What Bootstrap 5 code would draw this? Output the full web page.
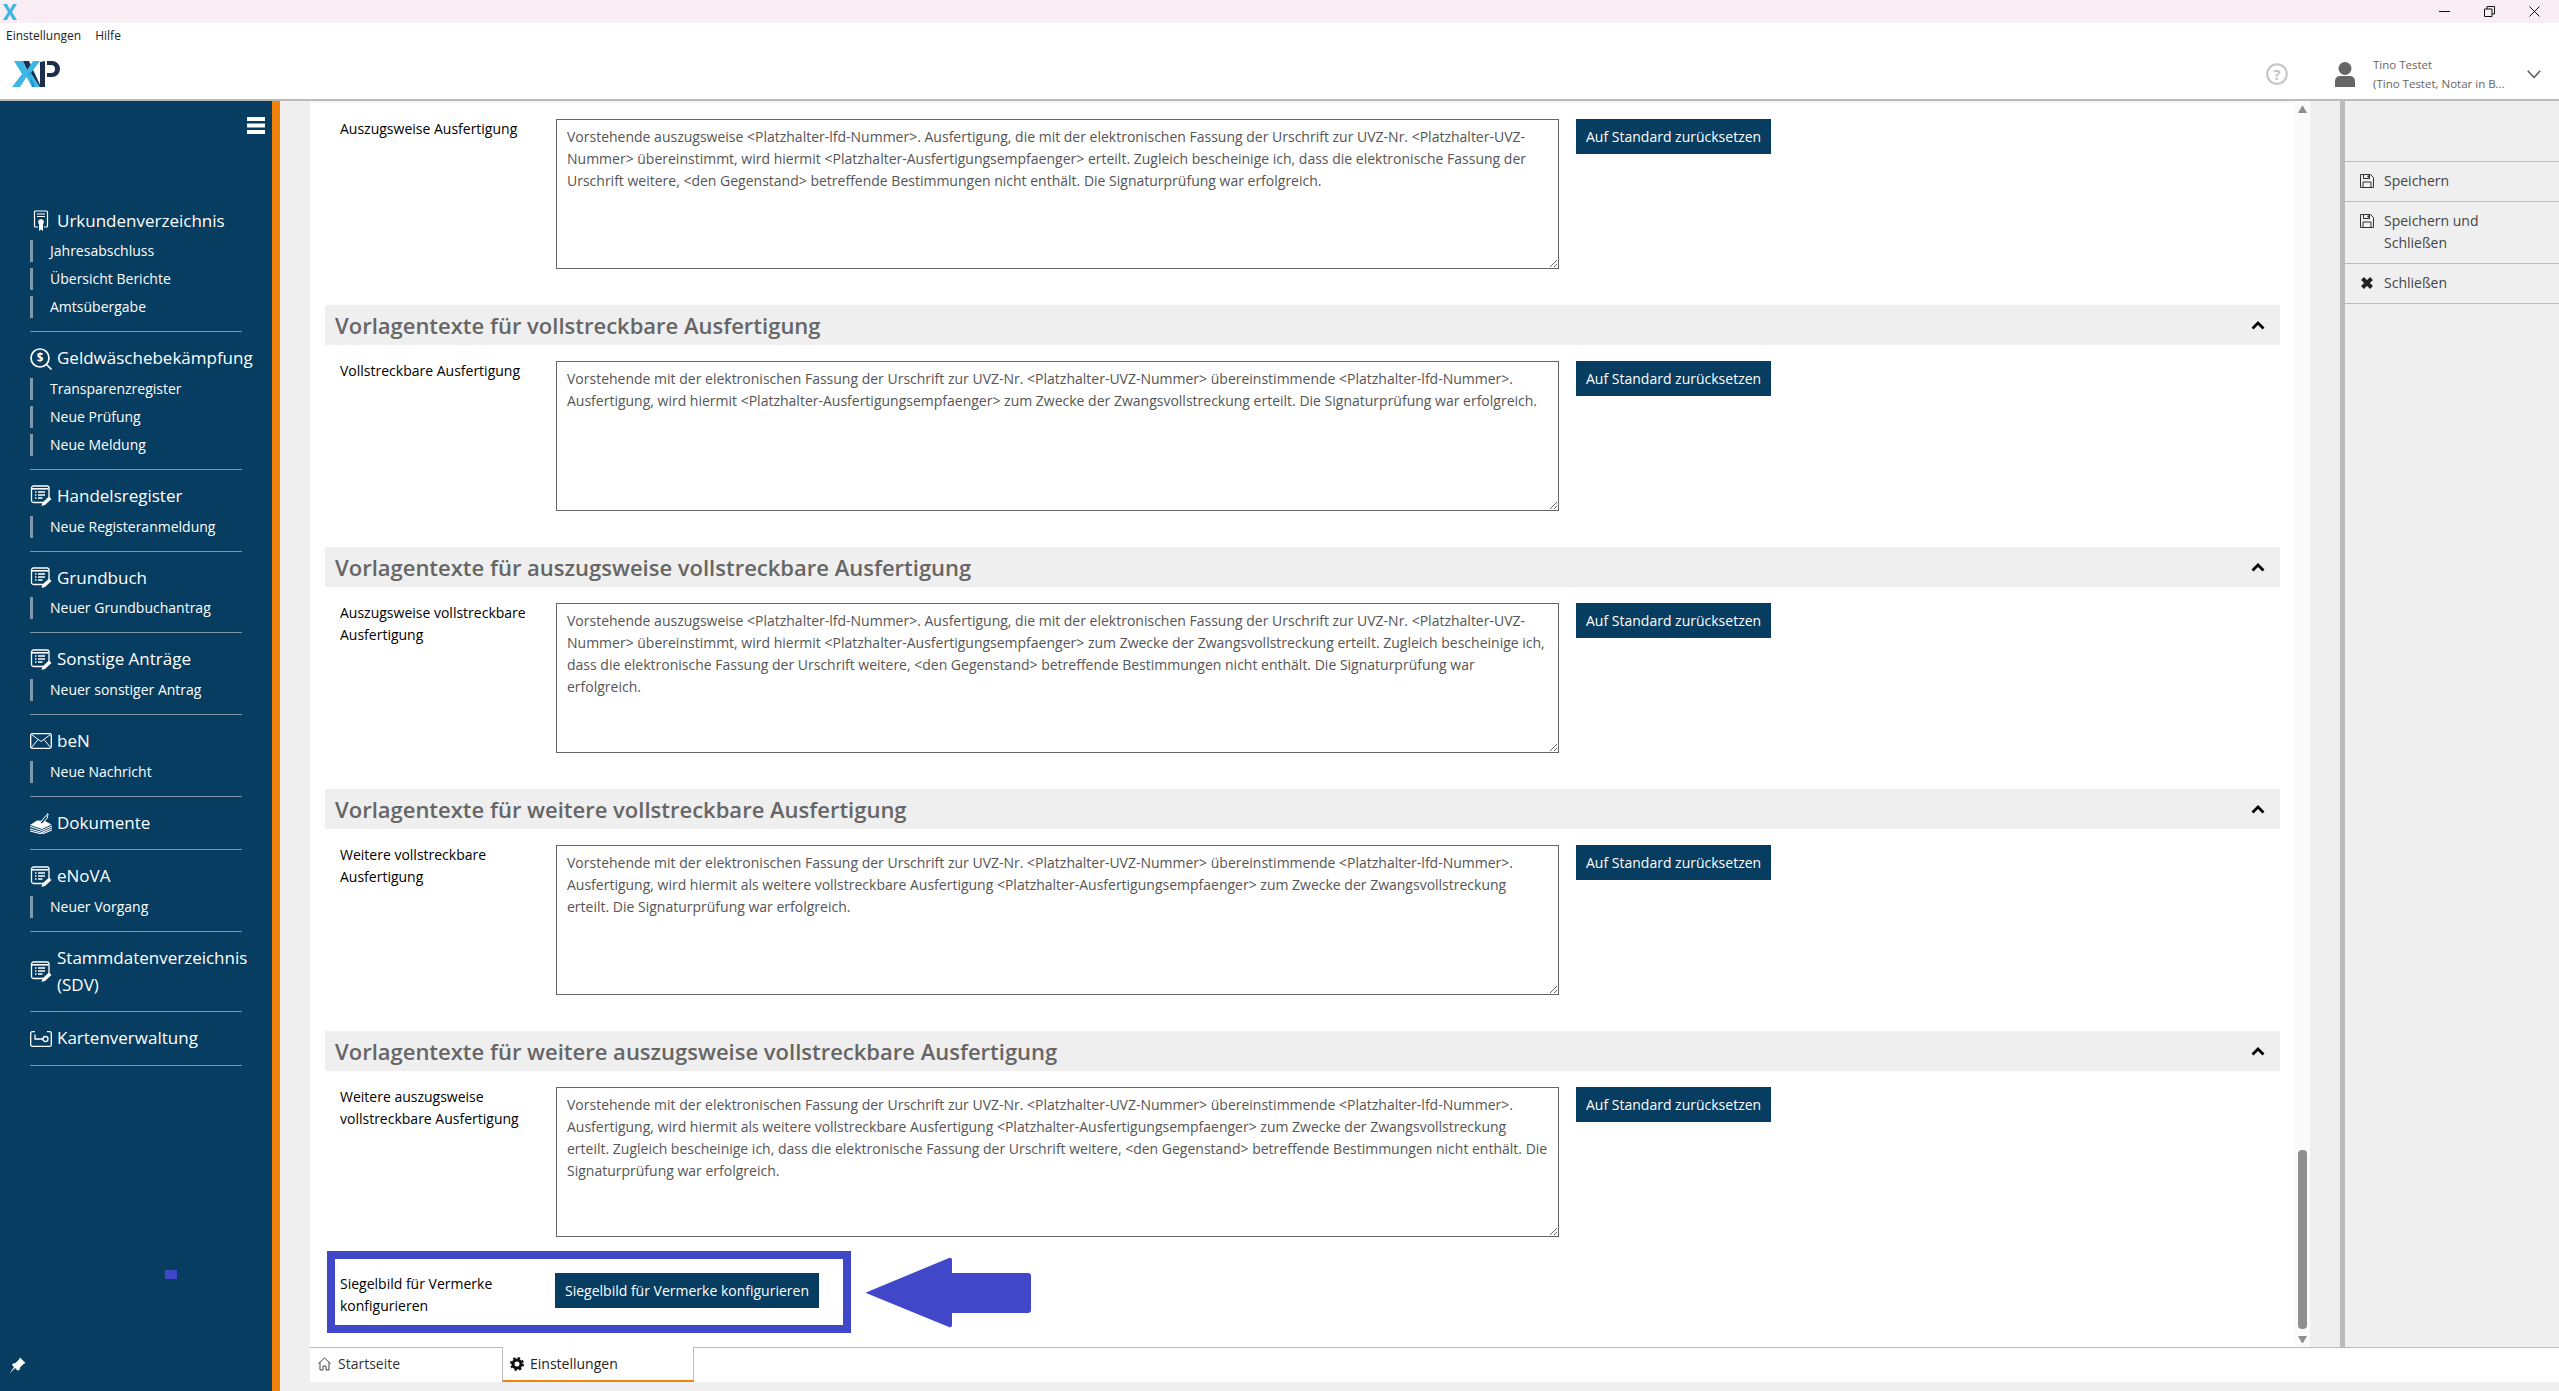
<!DOCTYPE html>
<html lang="de">
<head>
    <meta charset="UTF-8">
    <meta name="viewport" content="width=device-width, initial-scale=1.0">
    <title>Einstellungen</title>
    <link href="https://cdn.jsdelivr.net/npm/bootstrap@5.3.0/dist/css/bootstrap.min.css" rel="stylesheet">
    <style>
        html, body { height: 100%; overflow: hidden; }
        body { font-family: "Open Sans", "Liberation Sans", sans-serif; font-size: 14px; line-height: 22px; background: #efefef; color: #000; }
        .win-title { height: 23px; background: #f8eef4; padding: 0 19px 0 3px; }
        .win-btns { gap: 34px; }
        .app-head { height: 78px; background: #fff; border-bottom: 2px solid #bbb; position: relative; }
        .app-menu { font-size: 12px; line-height: 16px; padding: 5px 0 0 6px; gap: 14px; color: #222; }
        .app-logo { display: block; margin: 16px 0 0 12px; }
        .head-right { padding: 26px 18px 0 0; }
        .help-ico { margin-right: 47px; }
        .user-text { font-size: 11.5px; line-height: 19px; color: #666; width: 140px; margin: 0 14px 0 18px; }
        .main-area { height: 1290px; }
        .side { width: 280px; background: #063d60; border-right: 8px solid #f28109; color: #fff; padding: 16px 0 0 30px; position: relative; }
        .burger { margin: 0 0 60.67px 217px; width: 18px; height: 17px; display: block; }
        .side-group { width: 212px; border-bottom: 1px solid #7e97a9; padding: 13px 0; }
        .side-head { font-size: 17px; line-height: 26.67px; gap: 5px; }
        .side-head svg { flex: 0 0 22px; }
        .side-subs { margin-top: 6px; gap: 6px; }
        .side-sub { border-left: 3px solid #7e97a9; padding-left: 17px; font-size: 14px; white-space: nowrap; }
        .side-pin { position: absolute; left: 9px; top: 1256px; }
        .gutter { width: 30px; }
        .content-wrap { width: 1985px; background: #fff; padding: 16px 15px 0; border-top: 2px solid #f6f6f6; overflow: hidden; }
        .sec-row { height: 150px; margin-bottom: 36px; }
        .sec-label { width: 231px; padding: 0 30px 0 15px; flex: 0 0 231px; }
        .sec-label-top { margin-top: -1px; }
        .sec-text.form-control { width: 1003px; height: 150px; flex: 0 0 1003px; border: 1px solid #666; border-radius: 0; padding: 6px 9px 6px 10px; font-size: 14px; line-height: 22px; color: #555; resize: both; box-shadow: none; }
        .sec-btn.btn { background: #063d60; color: #fff; border: 0; border-radius: 0; font-size: 14px; line-height: 22px; padding: 6.5px 10px; height: 35px; white-space: nowrap; }
        .btn-reset { margin-left: 17px; }
        .btn-seal { margin-left: -1px; }
        .sec-head { height: 40px; background: #efefef; padding: 0 15px 0 10px; margin-bottom: 16px; }
        .sec-head h5 { font-size: 22px; line-height: 40px; font-weight: 600; color: #666; margin: 0; }
        .track { width: 15px; background: #fafafa; padding: 5px 3px 4px; }
        .thumb { width: 9px; height: 179px; background: #8e8e8e; border-radius: 4px; margin: auto 0 7px; }
        .tri-up { border-left: 4.5px solid transparent; border-right: 4.5px solid transparent; border-bottom: 7px solid #8e8e8e; }
        .tri-down { border-left: 4.5px solid transparent; border-right: 4.5px solid transparent; border-top: 7px solid #8e8e8e; }
        .panel-gap { width: 30px; }
        .panel { width: 219px; border-left: 5px solid #bbb; padding-top: 60px; }
        .panel-item { border-top: 1px solid #bbb; padding: 8px 15px 9px; gap: 10px; color: #444; font-size: 14px; background: transparent; }
        .panel-item:last-child { border-bottom: 1px solid #bbb; }
        .panel-item svg { flex: 0 0 14px; margin-top: 4px; }
        .tab-strip { height: 35px; background: #fff; border-top: 1px solid #bbb; margin: 0 0 9px 30px; }
        .tab-item { width: 192px; padding: 0 0 2px 8px; gap: 7px; height: 34px; color: #333; font-size: 14px; }
        .tab-on { width: 192px; margin-top: -1px; height: 35px; padding: 0 0 0 7px; gap: 6px; background: #fff; border-left: 1px solid #bbb; border-right: 1px solid #bbb; border-bottom: 2px solid #f28109; color: #222; }
        .mark-box { position: absolute; left: 327px; top: 1251px; width: 524px; height: 82px; border: 8px solid #4047c9; }
        .mark-arrow { position: absolute; left: 865px; top: 1257px; }
        .mark-dot { position: absolute; left: 165px; top: 1270px; width: 12px; height: 9px; background: #4047c9; }
    </style>
</head>
<body>
    <svg width="0" height="0" class="position-absolute">
        <symbol id="ico-form" viewBox="0 0 22 22">
            <path d="M15 17.5H3.5A2 2 0 0 1 1.5 15.5V3A2 2 0 0 1 3.5 1H17A2 2 0 0 1 19 3V12" fill="none" stroke="#fff" stroke-width="1.3"/>
            <path d="M2 3.8H18.500" stroke="#fff" stroke-width="1.6"/>
            <path d="M5 7H6.500M8 7H15M5 10H6.500M8 10H15M5 13H6.500M8 13H12.500" stroke="#fff" stroke-width="1.300"/>
            <path d="M11.500 21L12.500 17.500L19 11.500L21.500 14L15 20Z" fill="#fff"/>
        </symbol>
        <symbol id="ico-disk" viewBox="0 0 14 14">
            <path d="M.5.5H10.500L13.500 3.500V13.500H.5Z" fill="none" stroke="#333" stroke-width="1"/>
            <path d="M3.500.5V4.500H9.500V.5M3 13.500V8H11V13.500" fill="none" stroke="#333" stroke-width="1"/>
            <path d="M7.500 1.500H9V3.500H7.500Z" fill="#333"/>
        </symbol>
    </svg>

    <div class="win-title d-flex justify-content-between align-items-center">
        <svg width="14" height="16" viewBox="0 0 14 16"><path d="M0 0H4L7 5.500L10 0H14L9 8L14 16H10L7 10.500L4 16H0L5 8Z" fill="#3db6e6"/></svg>
        <div class="win-btns d-flex align-items-center">
            <svg width="11" height="11" viewBox="0 0 11 11"><path d="M0 5.500H11" stroke="#111" stroke-width="1"/></svg>
            <svg width="11" height="11" viewBox="0 0 11 11"><path d="M.5 3H8V10.500H.5ZM3 3V.5H10.500V8H8" fill="none" stroke="#111" stroke-width="1"/></svg>
            <svg width="11" height="11" viewBox="0 0 11 11"><path d="M.5.5L10.500 10.500M10.500.5L.5 10.500" stroke="#111" stroke-width="1"/></svg>
        </div>
    </div>

    <div class="app-head d-flex justify-content-between">
        <div>
            <div class="app-menu d-flex"><span>Einstellungen</span><span>Hilfe</span></div>
            <svg class="app-logo" width="48" height="28" viewBox="0 0 48 28">
                <path d="M33 1V27H28V2Z" fill="#1c2f4c"/>
                <path d="M11 1H17L29 27H23Z" fill="#1c2f4c"/>
                <path d="M35 1H40A8 8 0 0 1 40 17H35V13H39A4 4 0 0 0 39 5H35Z" fill="#1c2f4c"/>
                <path d="M2 1H10L15 10L21 1H28L19 13L28 27H20L14.500 17L8 27H0L10 14Z" fill="#3db6e6"/>
                <path d="M11 1H10L15 10L18 14L20 27H23Z" fill="#1a8bc4"/>
            </svg>
        </div>
        <div class="head-right d-flex align-items-center">
            <svg class="help-ico" width="22" height="22" viewBox="0 0 22 22"><circle cx="11" cy="11" r="9.800" fill="none" stroke="#c4c4c4" stroke-width="2"/><text x="11" y="16.500" text-anchor="middle" font-family="Open Sans, sans-serif" font-weight="700" font-size="15" fill="#c4c4c4">?</text></svg>
            <svg width="20" height="25" viewBox="0 0 20 25"><circle cx="10" cy="6.500" r="6.500" fill="#666"/><path d="M0 25V19A5 5 0 0 1 5 14H15A5 5 0 0 1 20 19V25Z" fill="#666"/></svg>
            <div class="user-text"><div>Tino Testet</div><div>(Tino Testet, Notar in B...</div></div>
            <svg width="14" height="9" viewBox="0 0 14 9"><path d="M.8.8L7 7.500L13.200.8" fill="none" stroke="#555" stroke-width="1.500"/></svg>
        </div>
    </div>

    <div class="main-area d-flex">
        <nav class="side flex-shrink-0">
            <svg class="burger" viewBox="0 0 18 17"><path d="M0 0H18V4H0ZM0 6.500H18V10.500H0ZM0 13H18V17H0Z" fill="#fff"/></svg>

            <div class="side-group">
                <div class="side-head d-flex align-items-center">
                    <svg width="22" height="22" viewBox="0 0 22 22"><path d="M8 17H5.500A1 1 0 0 1 4.500 16V2A1 1 0 0 1 5.500 1H16.500A1 1 0 0 1 17.500 2V16A1 1 0 0 1 16.500 17H14" fill="none" stroke="#fff" stroke-width="1.200"/><path d="M7 4H15M7 6.500H15" stroke="#fff" stroke-width="1.200"/><circle cx="11" cy="12" r="2.800" fill="#fff"/><path d="M9 14H13V21L11 19.500L9 21Z" fill="#fff"/></svg>
                    <span>Urkundenverzeichnis</span>
                </div>
                <div class="side-subs d-flex flex-column">
                    <div class="side-sub">Jahresabschluss</div>
                    <div class="side-sub">Übersicht Berichte</div>
                    <div class="side-sub">Amtsübergabe</div>
                </div>
            </div>
            <div class="side-group">
                <div class="side-head d-flex align-items-center">
                    <svg width="22" height="22" viewBox="0 0 22 22"><circle cx="10" cy="10" r="9" fill="none" stroke="#fff" stroke-width="1.700"/><path d="M16.500 16.500L21.500 21.500" stroke="#fff" stroke-width="1.700"/><text x="10" y="14" text-anchor="middle" font-family="Open Sans, sans-serif" font-weight="700" font-size="11.500" fill="#fff">$</text></svg>
                    <span>Geldwäschebekämpfung</span>
                </div>
                <div class="side-subs d-flex flex-column">
                    <div class="side-sub">Transparenzregister</div>
                    <div class="side-sub">Neue Prüfung</div>
                    <div class="side-sub">Neue Meldung</div>
                </div>
            </div>
            <div class="side-group">
                <div class="side-head d-flex align-items-center"><svg width="22" height="22"><use href="#ico-form"/></svg><span>Handelsregister</span></div>
                <div class="side-subs d-flex flex-column"><div class="side-sub">Neue Registeranmeldung</div></div>
            </div>
            <div class="side-group">
                <div class="side-head d-flex align-items-center"><svg width="22" height="22"><use href="#ico-form"/></svg><span>Grundbuch</span></div>
                <div class="side-subs d-flex flex-column"><div class="side-sub">Neuer Grundbuchantrag</div></div>
            </div>
            <div class="side-group">
                <div class="side-head d-flex align-items-center"><svg width="22" height="22"><use href="#ico-form"/></svg><span>Sonstige Anträge</span></div>
                <div class="side-subs d-flex flex-column"><div class="side-sub">Neuer sonstiger Antrag</div></div>
            </div>
            <div class="side-group">
                <div class="side-head d-flex align-items-center">
                    <svg width="22" height="16" viewBox="0 0 22 16"><rect x=".7" y=".7" width="20.600" height="14.600" rx="1.500" fill="none" stroke="#fff" stroke-width="1.300"/><path d="M1.500 1.500L11 8.500L20.500 1.500M1.500 14.500L8 6.500M20.500 14.500L14 6.500" fill="none" stroke="#fff" stroke-width="1"/></svg>
                    <span>beN</span>
                </div>
                <div class="side-subs d-flex flex-column"><div class="side-sub">Neue Nachricht</div></div>
            </div>
            <div class="side-group">
                <div class="side-head d-flex align-items-center">
                    <svg width="22" height="21" viewBox="0 0 22 21"><path d="M0 12L7 7.500L15 8L21.500 11.500L12 16Z" fill="#fff"/><path d="M0 13.500L12 17.500L22 13M0 16L12 19.500L22 15M0 18L12 21L22 17" fill="none" stroke="#fff" stroke-width="1.100"/><path d="M10 10L16 2.500L18 4L12 11Z" fill="#063d60" stroke="#fff" stroke-width="1"/><path d="M16 3L17.500 0L19 2Z" fill="#fff"/></svg>
                    <span>Dokumente</span>
                </div>
            </div>
            <div class="side-group">
                <div class="side-head d-flex align-items-center"><svg width="22" height="22"><use href="#ico-form"/></svg><span>eNoVA</span></div>
                <div class="side-subs d-flex flex-column"><div class="side-sub">Neuer Vorgang</div></div>
            </div>
            <div class="side-group">
                <div class="side-head d-flex align-items-center"><svg width="22" height="22"><use href="#ico-form"/></svg><span>Stammdatenverzeichnis (SDV)</span></div>
            </div>
            <div class="side-group">
                <div class="side-head d-flex align-items-center">
                    <svg width="22" height="16" viewBox="0 0 22 16"><path d="M5 .7H2.200A1.500 1.500 0 0 0 .7 2.200V13.800A1.500 1.500 0 0 0 2.200 15.300H19.800A1.500 1.500 0 0 0 21.300 13.800V2.200A1.500 1.500 0 0 0 19.800.7H17" fill="none" stroke="#fff" stroke-width="1.300"/><path d="M5 3.500V8H13" fill="none" stroke="#fff" stroke-width="1.300"/><circle cx="15.500" cy="8" r="2.500" fill="none" stroke="#fff" stroke-width="1.300"/></svg>
                    <span>Kartenverwaltung</span>
                </div>
            </div>

            <svg class="side-pin" width="17" height="17" viewBox="0 0 17 17"><path d="M11 .5L16.500 6L14.500 7L11 10.500L10.500 13L8.500 13.500L6 11L.5 16.500L5 10L3 8L4 6.500L6.500 6L10 2.500Z" fill="#fff"/></svg>
        </nav>

        <div class="d-flex flex-column flex-grow-1">
            <div class="d-flex flex-grow-1 overflow-hidden">
                <div class="gutter"></div>
                <main class="content-wrap">
                    <div class="sec-row d-flex">
                        <div class="sec-label sec-label-top">Auszugsweise Ausfertigung</div>
                        <textarea class="sec-text form-control">Vorstehende auszugsweise &lt;Platzhalter-lfd-Nummer&gt;. Ausfertigung, die mit der elektronischen Fassung der Urschrift zur UVZ-Nr. &lt;Platzhalter-UVZ-Nummer&gt; übereinstimmt, wird hiermit &lt;Platzhalter-Ausfertigungsempfaenger&gt; erteilt. Zugleich bescheinige ich, dass die elektronische Fassung der Urschrift weitere, &lt;den Gegenstand&gt; betreffende Bestimmungen nicht enthält. Die Signaturprüfung war erfolgreich.</textarea>
                        <div><button type="button" class="sec-btn btn btn-reset">Auf Standard zurücksetzen</button></div>
                    </div>

                    <div class="sec-head d-flex justify-content-between align-items-center">
                        <h5>Vorlagentexte für vollstreckbare Ausfertigung</h5>
                        <svg width="14" height="9" viewBox="0 0 14 9"><path d="M1.500 7.500L7 2L12.500 7.500" fill="none" stroke="#000" stroke-width="2.800"/></svg>
                    </div>
                    <div class="sec-row d-flex">
                        <div class="sec-label sec-label-top">Vollstreckbare Ausfertigung</div>
                        <textarea class="sec-text form-control">Vorstehende mit der elektronischen Fassung der Urschrift zur UVZ-Nr. &lt;Platzhalter-UVZ-Nummer&gt; übereinstimmende &lt;Platzhalter-lfd-Nummer&gt;. Ausfertigung, wird hiermit &lt;Platzhalter-Ausfertigungsempfaenger&gt; zum Zwecke der Zwangsvollstreckung erteilt. Die Signaturprüfung war erfolgreich.</textarea>
                        <div><button type="button" class="sec-btn btn btn-reset">Auf Standard zurücksetzen</button></div>
                    </div>

                    <div class="sec-head d-flex justify-content-between align-items-center">
                        <h5>Vorlagentexte für auszugsweise vollstreckbare Ausfertigung</h5>
                        <svg width="14" height="9" viewBox="0 0 14 9"><path d="M1.500 7.500L7 2L12.500 7.500" fill="none" stroke="#000" stroke-width="2.800"/></svg>
                    </div>
                    <div class="sec-row d-flex">
                        <div class="sec-label sec-label-top">Auszugsweise vollstreckbare Ausfertigung</div>
                        <textarea class="sec-text form-control">Vorstehende auszugsweise &lt;Platzhalter-lfd-Nummer&gt;. Ausfertigung, die mit der elektronischen Fassung der Urschrift zur UVZ-Nr. &lt;Platzhalter-UVZ-Nummer&gt; übereinstimmt, wird hiermit &lt;Platzhalter-Ausfertigungsempfaenger&gt; zum Zwecke der Zwangsvollstreckung erteilt. Zugleich bescheinige ich, dass die elektronische Fassung der Urschrift weitere, &lt;den Gegenstand&gt; betreffende Bestimmungen nicht enthält. Die Signaturprüfung war erfolgreich.</textarea>
                        <div><button type="button" class="sec-btn btn btn-reset">Auf Standard zurücksetzen</button></div>
                    </div>

                    <div class="sec-head d-flex justify-content-between align-items-center">
                        <h5>Vorlagentexte für weitere vollstreckbare Ausfertigung</h5>
                        <svg width="14" height="9" viewBox="0 0 14 9"><path d="M1.500 7.500L7 2L12.500 7.500" fill="none" stroke="#000" stroke-width="2.800"/></svg>
                    </div>
                    <div class="sec-row d-flex">
                        <div class="sec-label sec-label-top">Weitere vollstreckbare Ausfertigung</div>
                        <textarea class="sec-text form-control">Vorstehende mit der elektronischen Fassung der Urschrift zur UVZ-Nr. &lt;Platzhalter-UVZ-Nummer&gt; übereinstimmende &lt;Platzhalter-lfd-Nummer&gt;. Ausfertigung, wird hiermit als weitere vollstreckbare Ausfertigung &lt;Platzhalter-Ausfertigungsempfaenger&gt; zum Zwecke der Zwangsvollstreckung erteilt. Die Signaturprüfung war erfolgreich.</textarea>
                        <div><button type="button" class="sec-btn btn btn-reset">Auf Standard zurücksetzen</button></div>
                    </div>

                    <div class="sec-head d-flex justify-content-between align-items-center">
                        <h5>Vorlagentexte für weitere auszugsweise vollstreckbare Ausfertigung</h5>
                        <svg width="14" height="9" viewBox="0 0 14 9"><path d="M1.500 7.500L7 2L12.500 7.500" fill="none" stroke="#000" stroke-width="2.800"/></svg>
                    </div>
                    <div class="sec-row d-flex">
                        <div class="sec-label sec-label-top">Weitere auszugsweise vollstreckbare Ausfertigung</div>
                        <textarea class="sec-text form-control">Vorstehende mit der elektronischen Fassung der Urschrift zur UVZ-Nr. &lt;Platzhalter-UVZ-Nummer&gt; übereinstimmende &lt;Platzhalter-lfd-Nummer&gt;. Ausfertigung, wird hiermit als weitere vollstreckbare Ausfertigung &lt;Platzhalter-Ausfertigungsempfaenger&gt; zum Zwecke der Zwangsvollstreckung erteilt. Zugleich bescheinige ich, dass die elektronische Fassung der Urschrift weitere, &lt;den Gegenstand&gt; betreffende Bestimmungen nicht enthält. Die Signaturprüfung war erfolgreich.</textarea>
                        <div><button type="button" class="sec-btn btn btn-reset">Auf Standard zurücksetzen</button></div>
                    </div>

                    <div class="d-flex">
                        <div class="sec-label">Siegelbild für Vermerke konfigurieren</div>
                        <div><button type="button" class="sec-btn btn btn-seal">Siegelbild für Vermerke konfigurieren</button></div>
                    </div>
                </main>
                <div class="track d-flex flex-column">
                    <div class="tri-up"></div>
                    <div class="thumb"></div>
                    <div class="tri-down"></div>
                </div>
                <div class="panel-gap"></div>
                <aside class="panel flex-grow-1">
                    <div class="panel-item d-flex"><svg width="14" height="14"><use href="#ico-disk"/></svg><span>Speichern</span></div>
                    <div class="panel-item d-flex"><svg width="14" height="14"><use href="#ico-disk"/></svg><span>Speichern und<br>Schließen</span></div>
                    <div class="panel-item d-flex"><svg width="14" height="14" viewBox="0 0 14 14"><path d="M2.500 2.500L11.500 11.500M11.500 2.500L2.500 11.500" stroke="#222" stroke-width="4"/></svg><span>Schließen</span></div>
                </aside>
            </div>

            <div class="tab-strip d-flex flex-shrink-0">
                <div class="tab-item d-flex align-items-center">
                    <svg width="13" height="14" viewBox="0 0 13 14"><path d="M.5 6.500L6.500 1L12.500 6.500M2 5.500V13H5V9H8V13H11V5.500" fill="none" stroke="#444" stroke-width="1"/></svg>
                    <span>Startseite</span>
                </div>
                <div class="tab-item tab-on d-flex align-items-center">
                    <svg width="14" height="14" viewBox="0 0 14 14"><circle cx="7" cy="7" r="4" fill="none" stroke="#111" stroke-width="3"/><circle cx="7" cy="7" r="6" fill="none" stroke="#111" stroke-width="2" stroke-dasharray="2.400 2.310"/></svg>
                    <span>Einstellungen</span>
                </div>
            </div>
        </div>
    </div>

    <div class="mark-box"></div>
    <div class="mark-dot"></div>
    <svg class="mark-arrow" width="166" height="71" viewBox="0 0 166 71"><path d="M1 35.500L84 1Q87 0 87 3V16H163Q166 16 166 19V53Q166 56 163 56H87V68Q87 71 84 70L1 36Z" fill="#4047c9"/></svg>
</body>
</html>
